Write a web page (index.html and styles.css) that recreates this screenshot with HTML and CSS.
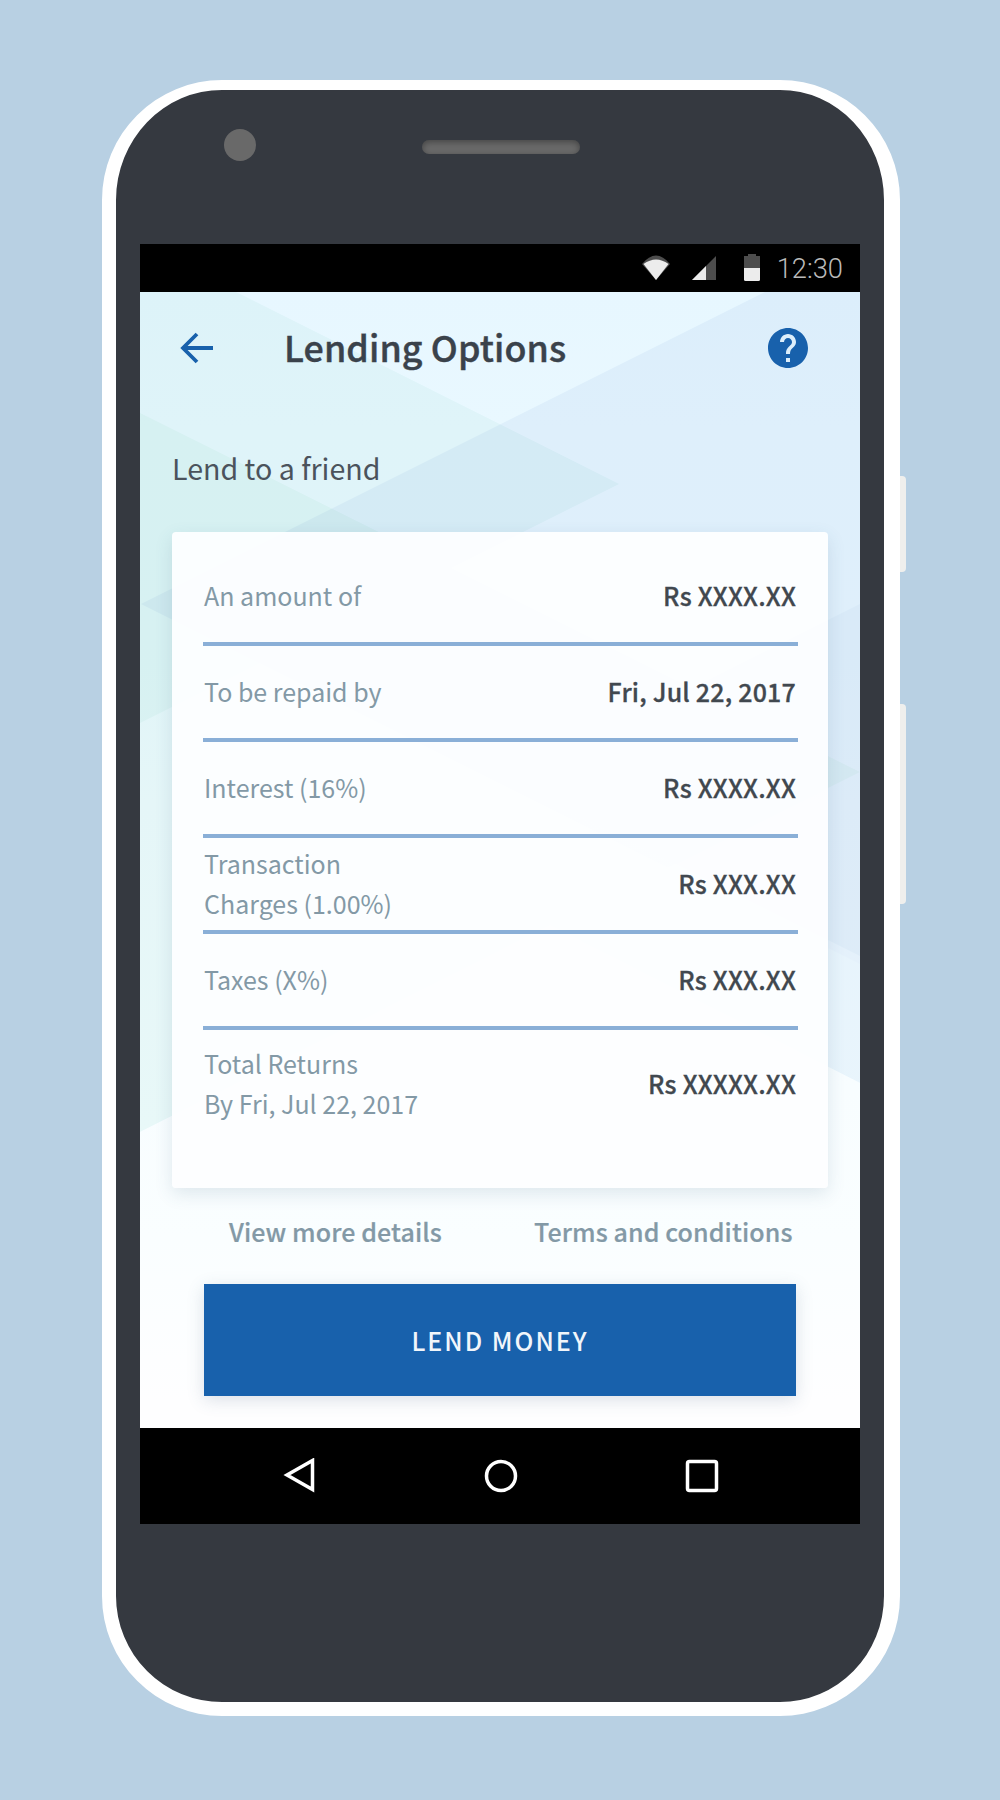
FILE: index.html
```html
<!DOCTYPE html>
<html lang="en">
<head>
<meta charset="utf-8">
<title>Lending Options</title>
<link rel="stylesheet" href="styles.css">
</head>
<body>
<div class="phone">
  <span class="side-key side-key-power"></span>
  <span class="side-key side-key-volume"></span>
  <div class="bezel-top">
    <span class="camera"></span>
    <span class="speaker"></span>
  </div>
  <div class="screen">
    <div class="status-bar">
      <svg class="status-icons" viewBox="0 0 124 48" width="124" height="48">
        <path fill="#4d4d4d" d="M0 16Q14-1 28 16L14 32Z"/>
        <path fill="#ececec" d="M1.500 16Q14 7 26.500 16L14 32Z"/>
        <path fill="#4d4d4d" d="M74 8V32H50Z"/>
        <path fill="#ececec" d="M64 18V32H50Z"/>
        <path fill="#4d4d4d" d="M106 6H114V8H118V20H102V8H106Z"/>
        <path fill="#ececec" d="M102 20H118V31.500Q118 33 116.500 33H103.500Q102 33 102 31.500Z"/>
      </svg>
      <span class="clock">12:30</span>
    </div>
    <main class="app">
      <svg class="backdrop" viewBox="140 292 720 1136" width="720" height="1136">
        <defs>
          <linearGradient id="sky" x1="0" y1="0" x2="0" y2="1">
            <stop offset="0" stop-color="#e7f7ff"/>
            <stop offset=".12" stop-color="#e9f8ff"/>
            <stop offset=".3" stop-color="#eaf8ff"/>
            <stop offset=".45" stop-color="#eff9ff"/>
            <stop offset=".74" stop-color="#f2fbff"/>
            <stop offset="1" stop-color="#f4fcff"/>
          </linearGradient>
          <linearGradient id="floor" gradientUnits="userSpaceOnUse" x1="0" y1="940" x2="0" y2="1400">
            <stop offset="0" stop-color="#f6fcff"/>
            <stop offset=".65" stop-color="#fafeff"/>
            <stop offset="1" stop-color="#fefeff"/>
          </linearGradient>
        </defs>
        <path fill="url(#sky)" d="M140 292H860V1428H140Z"/>
        <path class="facet" fill="#f4fbf9" d="M140 292H236L619 484L140 723Z"/>
        <path class="facet" fill="#f5fcf8" d="M140 413L860 772L140 1132Z"/>
        <path class="facet" fill="#f3f6fb" d="M765 292H860V964L141 604Z"/>
        <path class="facet" fill="#f8fafc" d="M860 604L508 780L860 956Z"/>
        <path class="facet" fill="#f6f9fc" d="M500 784L860 964V1083L500 903Z"/>
        <path fill="url(#floor)" d="M140 1132L550 925L860 1083V1428H140Z"/>
      </svg>
      <header class="app-bar">
        <svg width="34" height="32" viewBox="0 0 34 32" fill="none" stroke="#1861ac" stroke-width="3.800">
          <path d="M33 16H3M17 2L3 16L17 30"/>
        </svg>
        <h1 class="title">Lending Options</h1>
        <svg class="help" width="40" height="40" viewBox="2 2 20 20" fill="#1861ac">
          <path d="M12 2C6.480 2 2 6.480 2 12s4.480 10 10 10 10-4.480 10-10S17.520 2 12 2zm1 17h-2v-2h2v2zm2.070-7.750l-.9.920C13.450 12.900 13 13.500 13 15h-2v-.5c0-1.100.45-2.100 1.170-2.830l1.240-1.260c.37-.36.59-.86.59-1.410 0-1.100-.9-2-2-2s-2 .9-2 2H8c0-2.210 1.790-4 4-4s4 1.790 4 4c0 .88-.36 1.680-.93 2.250z"/>
        </svg>
      </header>
      <h2 class="subtitle">Lend to a friend</h2>
      <section class="card">
        <dl class="rows">
          <div class="row"><dt>An amount of</dt><dd>Rs XXXX.XX</dd></div>
          <div class="row"><dt>To be repaid by</dt><dd>Fri, Jul 22, 2017</dd></div>
          <div class="row"><dt>Interest (16%)</dt><dd>Rs XXXX.XX</dd></div>
          <div class="row"><dt>Transaction<br>Charges (1.00%)</dt><dd>Rs XXX.XX</dd></div>
          <div class="row"><dt>Taxes (X%)</dt><dd>Rs XXX.XX</dd></div>
          <div class="row row-total"><dt>Total Returns<br>By Fri, Jul 22, 2017</dt><dd>Rs XXXXX.XX</dd></div>
        </dl>
      </section>
      <nav class="links"><a>View more details</a><a>Terms and conditions</a></nav>
      <button class="lend" type="button">LEND MONEY</button>
    </main>
    <div class="nav-bar">
      <svg width="33" height="36" viewBox="0 0 33 36"><path d="M29.500 2.500V31.500L4 17Z"/></svg>
      <svg width="34" height="34" viewBox="0 0 34 34"><circle cx="17" cy="17" r="14.500"/></svg>
      <svg width="34" height="34" viewBox="0 0 34 34"><rect x="2.500" y="2.500" width="29" height="29" rx="2"/></svg>
    </div>
  </div>
</div>
</body>
</html>
```
FILE: styles.css
```css
* { box-sizing: border-box; }
body {
  margin: 0;
  width: 1000px;
  height: 1800px;
  padding: 80px 100px 84px 102px;
  background: #b8d0e3;
  font-family: "Noto Sans CJK SC", "Noto Sans", sans-serif;
}
.phone {
  position: relative;
  width: 798px;
  height: 1636px;
  border: solid #fff;
  border-width: 10px 16px 14px 14px;
  border-radius: 120px;
  background: #353940;
  padding: 0 24px;
}
.side-key {
  position: absolute;
  left: 784px;
  width: 6px;
  background: #efefed;
  border-radius: 0 4px 4px 0;
}
.side-key-power { top: 386px; height: 96px; }
.side-key-volume { top: 614px; height: 200px; }
.bezel-top {
  height: 154px;
  padding: 39px 0 0 84px;
  display: flex;
  align-items: flex-start;
  gap: 166px;
}
.camera {
  width: 32px;
  height: 32px;
  margin-top: .4px;
  border-radius: 50%;
  background: #696969;
}
.speaker {
  width: 158px;
  height: 14px;
  margin-top: 11px;
  border-radius: 7px;
  background: #696969;
  box-shadow: inset 0 2px 6px rgba(0, 0, 0, .35);
}
.screen { width: 720px; }
.status-bar {
  height: 48px;
  padding-right: 17px;
  background: #000;
  display: flex;
  align-items: center;
  justify-content: flex-end;
  gap: 12px;
}
.status-icons { margin: 8px -1px 0 0; }
.clock {
  font: 300 27.300px/48px Roboto, sans-serif;
  padding-top: 2px;
  color: #bababa;
}
.app {
  position: relative;
  height: 1136px;
  padding: 0 32px;
  isolation: isolate;
}
.backdrop {
  position: absolute;
  inset: 0;
  z-index: -1;
}
.facet { mix-blend-mode: multiply; }
.app-bar {
  height: 112px;
  padding: 0 20px 0 7.500px;
  display: flex;
  align-items: center;
}
.title {
  margin: 0 0 4px 70.500px;
  font-size: 35.800px;
  font-weight: 500;
  line-height: 48px;
  letter-spacing: .1px;
  -webkit-text-stroke: .4px #3a424b;
  color: #3a424b;
}
.help { margin-left: auto; }
.subtitle {
  margin: 40px 0 0;
  height: 88px;
  font-size: 28.600px;
  font-weight: 400;
  line-height: 48px;
  color: #4b535c;
}
.card {
  height: 656px;
  padding: 18px 30.500px;
  border-radius: 4px;
  background: rgba(253, 254, 255, .95);
  box-shadow: 0 6px 18px rgba(60, 100, 130, .14);
}
.rows { margin: 0; }
.row {
  height: 96px;
  padding: 0 1.500px 2px;
  border-bottom: 4px solid #8aafd7;
  display: flex;
  align-items: center;
  justify-content: space-between;
  font-size: 25px;
  line-height: 40px;
}
.row-total { height: 108px; border: 0; }
dt { color: #8399a6; }
dd {
  margin: 0;
  font-weight: 500;
  letter-spacing: .2px;
  -webkit-text-stroke: .3px #41484f;
  color: #41484f;
}
.links {
  height: 96px;
  padding: 0 35.500px 11px 57px;
  display: flex;
  align-items: center;
  justify-content: space-between;
  font-size: 25px;
  font-weight: 500;
  letter-spacing: .1px;
  -webkit-text-stroke: .2px #8399a6;
  color: #8399a6;
}
.lend {
  display: block;
  width: 592px;
  height: 112px;
  margin: 0 32px;
  padding: 0 0 1px;
  border: 0;
  background: #1861ac;
  box-shadow: 0 4px 16px rgba(60, 90, 120, .18);
  font: 500 25px/40px "Noto Sans CJK SC", "Noto Sans", sans-serif;
  letter-spacing: 2px;
  color: #f1f6fb;
}
.nav-bar {
  height: 96px;
  padding: 0 141px 0 143px;
  background: #000;
  display: flex;
  align-items: center;
  justify-content: space-between;
}
.nav-bar svg { fill: none; stroke: #fff; stroke-width: 3.500; }
```
